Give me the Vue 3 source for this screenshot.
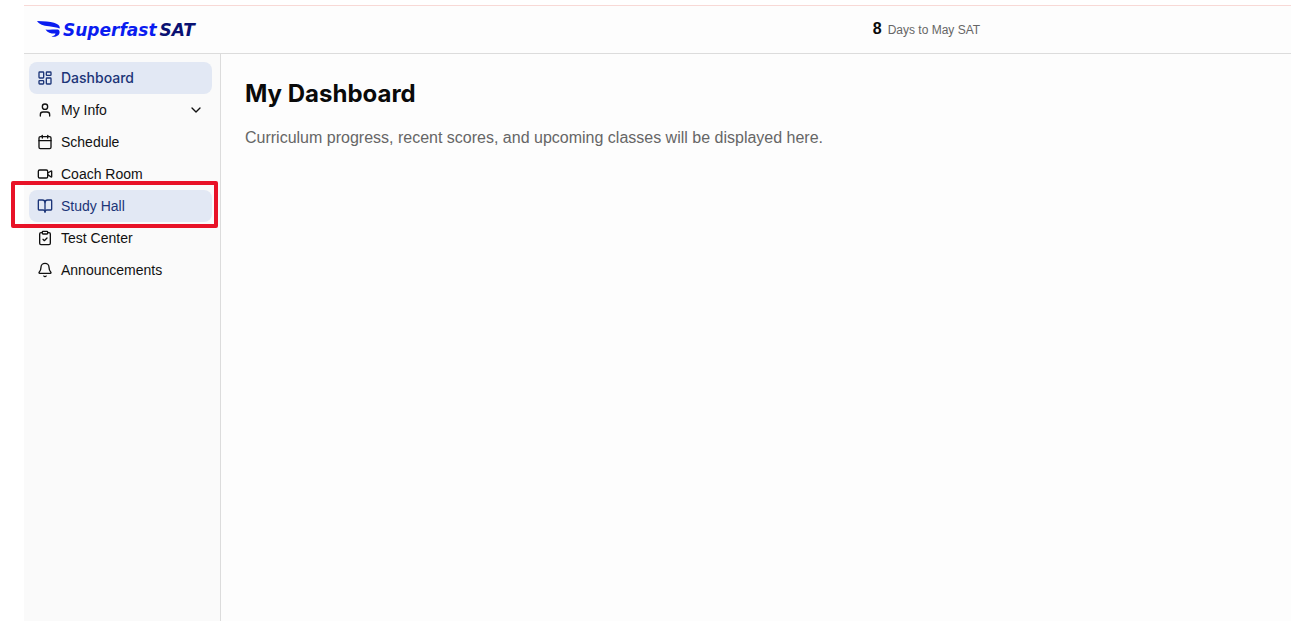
<script setup>
const items = [
  { label: 'Dashboard', icon: 'dashboard', active: true },
  { label: 'My Info', icon: 'user', expandable: true },
  { label: 'Schedule', icon: 'calendar' },
  { label: 'Coach Room', icon: 'video' },
  { label: 'Study Hall', icon: 'book', hovered: true, marked: true },
  { label: 'Test Center', icon: 'clipboard' },
  { label: 'Announcements', icon: 'bell' },
]

const icons = {
  dashboard: [
    'M4 3h5a1 1 0 0 1 1 1v7a1 1 0 0 1-1 1H4a1 1 0 0 1-1-1V4a1 1 0 0 1 1-1z',
    'M15 3h5a1 1 0 0 1 1 1v3a1 1 0 0 1-1 1h-5a1 1 0 0 1-1-1V4a1 1 0 0 1 1-1z',
    'M15 12h5a1 1 0 0 1 1 1v7a1 1 0 0 1-1 1h-5a1 1 0 0 1-1-1v-7a1 1 0 0 1 1-1z',
    'M4 16h5a1 1 0 0 1 1 1v3a1 1 0 0 1-1 1H4a1 1 0 0 1-1-1v-3a1 1 0 0 1 1-1z',
  ],
  user: ['M19 21v-2a4 4 0 0 0-4-4H9a4 4 0 0 0-4 4v2', 'M12 3a4 4 0 1 0 0 8a4 4 0 1 0 0-8z'],
  calendar: [
    'M8 2v4',
    'M16 2v4',
    'M5 4h14a2 2 0 0 1 2 2v14a2 2 0 0 1-2 2H5a2 2 0 0 1-2-2V6a2 2 0 0 1 2-2z',
    'M3 10h18',
  ],
  video: [
    'm16 13 5.223 3.482a.5.5 0 0 0 .777-.416V7.87a.5.5 0 0 0-.752-.432L16 10.5',
    'M4 6h10a2 2 0 0 1 2 2v8a2 2 0 0 1-2 2H4a2 2 0 0 1-2-2V8a2 2 0 0 1 2-2z',
  ],
  book: [
    'M12 7v14',
    'M3 18a1 1 0 0 1-1-1V4a1 1 0 0 1 1-1h5a4 4 0 0 1 4 4 4 4 0 0 1 4-4h5a1 1 0 0 1 1 1v13a1 1 0 0 1-1 1h-6a3 3 0 0 0-3 3 3 3 0 0 0-3-3z',
  ],
  clipboard: [
    'M9 2h6a1 1 0 0 1 1 1v2a1 1 0 0 1-1 1H9a1 1 0 0 1-1-1V3a1 1 0 0 1 1-1z',
    'M16 4h2a2 2 0 0 1 2 2v14a2 2 0 0 1-2 2H6a2 2 0 0 1-2-2V6a2 2 0 0 1 2-2h2',
    'm9 14 2 2 4-4',
  ],
  bell: [
    'M10.268 21a2 2 0 0 0 3.464 0',
    'M3.262 15.326A1 1 0 0 0 4 17h16a1 1 0 0 0 .74-1.673C19.41 13.956 18 12.499 18 8A6 6 0 0 0 6 8c0 4.499-1.411 5.956-2.738 7.326',
  ],
}
</script>

<template>
  <div class="page">
    <div class="app">
      <header class="topbar">
        <a class="logo" href="#" aria-label="Superfast SAT">
          <svg class="wing" viewBox="0 0 23 18" aria-hidden="true">
            <path d="M0 0C7 .2 13 .4 17 1.800C21 3 23.400 5 22.600 7.600C20 6.200 16 6 12 5.300C6 4.600 2.500 3.400 0 0z" />
            <path d="M8.500 8.400C12 9.200 17 8.200 21 8.600C23.400 9.800 22.800 13.200 20.800 14.500C19 16 17 16 14.500 15.600C16.500 15 18.500 14.200 18.500 12.600C14.500 12.800 10.500 11.800 8.500 8.400z" />
          </svg>
          <span class="word">Superfast</span>
          <span class="word dark">SAT</span>
        </a>
        <p class="countdown"><strong>8</strong><span>Days to May SAT</span></p>
      </header>
      <div class="body">
        <nav class="sidebar" aria-label="Main">
          <ul>
            <li v-for="item in items" :key="item.label" :class="{ marked: item.marked }">
              <component
                :is="item.expandable ? 'button' : 'a'"
                class="item"
                :class="{ active: item.active, hovered: item.hovered }"
                :href="item.expandable ? undefined : '#'"
                :type="item.expandable ? 'button' : undefined"
                :aria-expanded="item.expandable ? 'false' : undefined"
                :aria-current="item.active ? 'page' : undefined"
              >
                <svg class="icon" viewBox="0 0 24 24" aria-hidden="true">
                  <path v-for="d in icons[item.icon]" :key="d" :d="d" />
                </svg>
                <span class="label">{{ item.label }}</span>
                <svg v-if="item.expandable" class="icon" viewBox="0 0 24 24" aria-hidden="true">
                  <path d="m6 9 6 6 6-6" />
                </svg>
              </component>
            </li>
          </ul>
        </nav>
        <main class="content">
          <h1>My Dashboard</h1>
          <p>Curriculum progress, recent scores, and upcoming classes will be displayed here.</p>
        </main>
      </div>
    </div>
  </div>
</template>

<style>
body {
  background: #fff;
}
</style>

<style scoped>
.page {
  box-sizing: border-box;
  min-height: 100vh;
  padding: 5px 4px 4px 24px;
  display: flex;
  font-family: "Liberation Sans", Arial, sans-serif;
  color: #111;
}
.app {
  flex: 1;
  display: flex;
  flex-direction: column;
  background: #fdfdfd;
  border-top: 1px solid #f8d9d6;
}
.topbar {
  display: grid;
  grid-template-columns: 196px 21fr auto 10fr;
  align-items: center;
  height: 47px;
  border-bottom: 1px solid #dcdcdc;
}
.logo {
  display: flex;
  align-items: center;
  gap: 3px;
  padding-left: 13px;
  text-decoration: none;
  color: #0a1cf0;
}
.wing {
  width: 23px;
  height: 18px;
  fill: currentColor;
}
.word {
  font-family: "DejaVu Sans", sans-serif;
  font-size: 17px;
  line-height: 24px;
  font-weight: 700;
  font-style: italic;
}
.dark {
  color: #0a1172;
}
.countdown {
  grid-column: 3;
  display: flex;
  align-items: baseline;
  gap: 6px;
  margin: 0;
  font-size: 12px;
  line-height: 24px;
  color: #666;
}
.countdown strong {
  font-size: 16px;
  font-weight: 600;
  color: #0a0a0a;
}
.body {
  flex: 1;
  display: flex;
}
.sidebar {
  box-sizing: border-box;
  width: 197px;
  padding: 8px 8px 8px 5px;
  background: #fafafa;
  border-right: 1px solid #dcdcdc;
}
ul {
  margin: 0;
  padding: 0;
  list-style: none;
}
.item {
  box-sizing: border-box;
  width: 100%;
  height: 32px;
  padding: 0 8px;
  display: flex;
  align-items: center;
  gap: 8px;
  border: 0;
  border-radius: 8px;
  background: transparent;
  font: inherit;
  font-size: 14px;
  line-height: 20px;
  text-align: left;
  text-decoration: none;
  color: #111;
}
.label {
  flex: 1;
}
.active,
.hovered {
  background: #e2e8f4;
  color: #1c3578;
}
.active {
  font-family: Inter, sans-serif;
  font-weight: 500;
}
.icon {
  width: 16px;
  height: 16px;
  fill: none;
  stroke: currentColor;
  stroke-width: 2;
  stroke-linecap: round;
  stroke-linejoin: round;
}
.marked {
  position: relative;
}
.marked::after {
  content: "";
  position: absolute;
  inset: -9px -6px -6px -18px;
  border: 4px solid #e81227;
  border-radius: 2px;
  pointer-events: none;
}
.content {
  flex: 1;
  padding: 24px;
}
h1 {
  margin: 0 0 16px;
  font-family: Inter, sans-serif;
  font-size: 24px;
  line-height: 32px;
  font-weight: 700;
  color: #0a0a0a;
}
.content p {
  margin: 0;
  font-size: 16px;
  line-height: 24px;
  color: #666;
}
</style>
